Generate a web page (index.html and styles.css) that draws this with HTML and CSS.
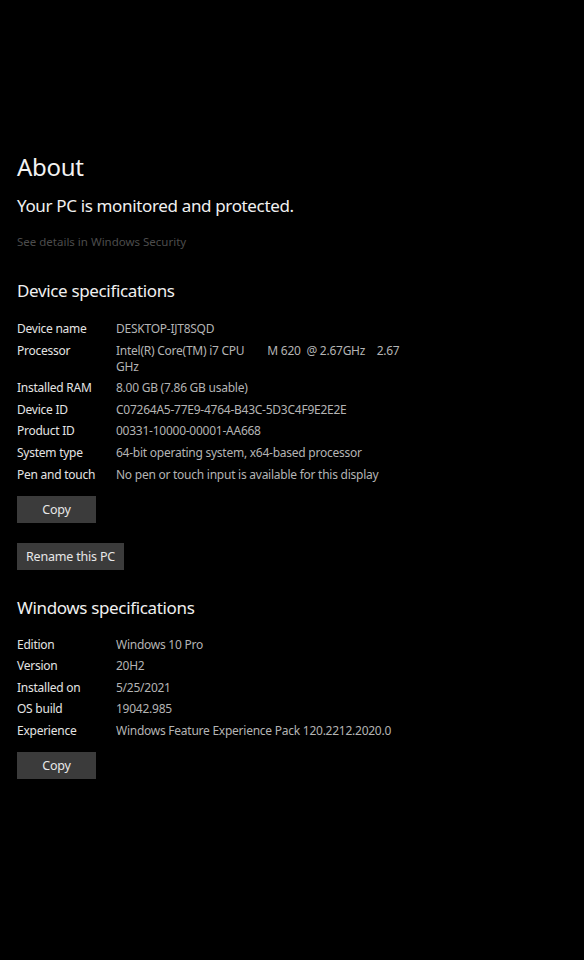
FILE: index.html
```html
<!DOCTYPE html>
<html lang="en">
<head>
    <meta charset="UTF-8">
    <meta name="viewport" content="width=device-width, initial-scale=1.0">
    <title>About</title>
    <link rel="stylesheet" href="styles.css">
</head>
<body>
    <div class="about-page">
        <h1 class="page-title">About</h1>
        <p class="security-status">Your PC is monitored and protected.</p>
        <a class="security-link" href="#">See details in Windows Security</a>

        <section class="spec-section">
            <h2 class="section-title">Device specifications</h2>
            <dl class="spec-list">
                <dt>Device name</dt><dd>DESKTOP-IJT8SQD</dd>
                <dt>Processor</dt><dd class="wrap">Intel(R) Core(TM) i7 CPU        M 620  @ 2.67GHz    2.67 GHz</dd>
                <dt>Installed RAM</dt><dd>8.00 GB (7.86 GB usable)</dd>
                <dt>Device ID</dt><dd>C07264A5-77E9-4764-B43C-5D3C4F9E2E2E</dd>
                <dt>Product ID</dt><dd>00331-10000-00001-AA668</dd>
                <dt>System type</dt><dd>64-bit operating system, x64-based processor</dd>
                <dt>Pen and touch</dt><dd>No pen or touch input is available for this display</dd>
            </dl>
            <button class="btn btn-copy">Copy</button>
            <button class="btn btn-rename">Rename this PC</button>
        </section>

        <section class="spec-section">
            <h2 class="section-title">Windows specifications</h2>
            <dl class="spec-list">
                <dt>Edition</dt><dd>Windows 10 Pro</dd>
                <dt>Version</dt><dd>20H2</dd>
                <dt>Installed on</dt><dd>5/25/2021</dd>
                <dt>OS build</dt><dd>19042.985</dd>
                <dt>Experience</dt><dd>Windows Feature Experience Pack 120.2212.2020.0</dd>
            </dl>
            <button class="btn btn-copy">Copy</button>
        </section>
    </div>
</body>
</html>
```

FILE: styles.css
```css
html, body { margin: 0; background: #000; }
body { font-family: "Noto Sans", "Open Sans", sans-serif; color: #e6e6e6; }
.about-page { padding: 151px 17px 0; display: flex; flex-direction: column; align-items: flex-start; }

.page-title { margin: 0; font-size: 24px; font-weight: 400; line-height: 32px; color: #f2f2f2; letter-spacing: -0.3px; }
.security-status { margin: 11px 0 0; font-size: 17px; line-height: 24px; color: #f0f0f0; letter-spacing: -0.35px; }
.security-link { margin-top: 16px; font-size: 11.5px; line-height: 16px; color: #4c4c4c; text-decoration: none; }

.spec-section { display: flex; flex-direction: column; align-items: flex-start; }
.section-title { margin: 29px 0 0; font-size: 17px; font-weight: 400; line-height: 24px; color: #f0f0f0; letter-spacing: -0.35px; }

.spec-list { margin: 18px 0 0; display: grid; grid-template-columns: 99px 300px; row-gap: 5.6px; font-size: 12px; line-height: 16px; letter-spacing: -0.25px; }
.spec-list dt { color: #e4e4e4; }
.spec-list dd { margin: 0; color: #b4b4b4; white-space: nowrap; }
.spec-list dd.wrap { white-space: pre-wrap; max-width: 290px; }

.btn { font-family: inherit; font-size: 12.5px; color: #e8e8e8; background: #3b3b3b; border: none; border-radius: 0; height: 27px; padding: 0; margin-top: 13px; white-space: nowrap; letter-spacing: -0.2px; cursor: pointer; }
.btn-copy { width: 79px; }
.btn-rename { width: 107px; margin-top: 20px; }
.spec-section + .spec-section .section-title { margin-top: 26px; }
.spec-section + .spec-section .spec-list { margin-top: 17px; }
```
